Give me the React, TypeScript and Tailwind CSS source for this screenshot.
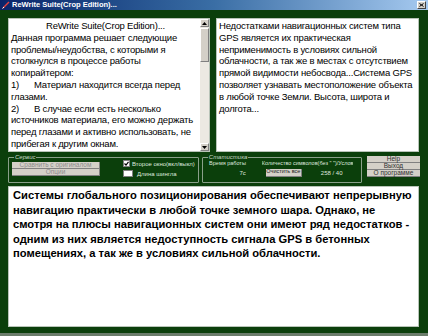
import React from 'react';

const leftLines: { text: string; num?: string; center?: boolean }[] = [
  { text: 'ReWrite Suite(Crop Edition)...', center: true },
  { text: 'Данная программа решает следующие' },
  { text: 'проблемы/неудобства, с которыми я' },
  { text: 'столкнулся в процессе работы' },
  { text: 'копирайтером:' },
  { num: '1)', text: 'Материал находится всегда перед' },
  { text: 'глазами.' },
  { num: '2)', text: 'В случае если есть несколько' },
  { text: 'источников материала, его можно держать' },
  { text: 'перед глазами и активно использовать, не' },
  { text: 'прибегая к другим окнам.' },
  { num: '3)', text: 'Имеется форма сравнения текстов' },
];

const rightLines = [
  'Недостатками навигационных систем типа',
  'GPS является их практическая',
  'неприменимость в условиях сильной',
  'облачности, а так же в местах с отсутствием',
  'прямой видимости небосвода...Система GPS',
  'позволяет узнавать местоположение объекта',
  'в любой точке Земли. Высота, широта и',
  'долгота...',
];

const mainLines = [
  'Системы глобального позиционирования обеспечивают непрерывную',
  'навигацию практически в любой точке земного шара. Однако, не',
  'смотря на плюсы навигационных систем они имеют ряд недостатков -',
  'одним из них является недоступность сигнала GPS в бетонных',
  'помещениях, а так же в условиях сильной облачности.',
];

const Arrow = ({ up }: { up?: boolean }) => (
  <div className="h-[8px] w-full bg-[#d4d0c8] border border-t-white border-l-white border-r-[#808080] border-b-[#808080] flex items-center justify-center">
    <svg width="5" height="3" viewBox="0 0 5 3">
      <path d={up ? 'M0 3 L2.5 0 L5 3 Z' : 'M0 0 L2.5 3 L5 0 Z'} fill="#000" />
    </svg>
  </div>
);

const SmallButton = ({ label, disabled }: { label: string; disabled?: boolean }) => (
  <div
    className={`h-[7px] bg-[#d4d0c8] border-b border-r border-[#808080] flex items-center justify-center text-[6.5px] leading-none ${
      disabled ? 'text-[#8c8c8c]' : 'text-[#202020]'
    }`}
  >
    {label}
  </div>
);

export default function App() {
  return (
    <div
      className="w-[428px] h-[336px] bg-[#0b3f0b] flex flex-col overflow-hidden border-b-[3px] border-[#6b7d6b]"
      style={{ fontFamily: '"Liberation Sans", Arial, sans-serif' }}
    >
      {/* title bar */}
      <div className="h-[10px] flex items-center bg-gradient-to-r from-[#0a246a] via-[#3a6ea5] to-[#a6caf0] px-[2px]">
        <svg width="8" height="8" viewBox="0 0 8 8" className="mr-[2px]">
          <path d="M1 7 L7 1" stroke="#e04040" strokeWidth="1.5" />
          <path d="M0.5 7.5 L2 6" stroke="#fff" strokeWidth="1" />
        </svg>
        <span className="text-[7.5px] font-bold text-white leading-none">ReWrite Suite(Crop Edition)...</span>
        <div className="ml-auto w-[9px] h-[8px] bg-[#d4d0c8] border border-t-white border-l-white border-r-[#404040] border-b-[#404040] flex items-center justify-center">
          <svg width="5" height="4" viewBox="0 0 5 4">
            <path d="M0.5 0.5 L4.5 3.5 M4.5 0.5 L0.5 3.5" stroke="#000" strokeWidth="1" />
          </svg>
        </div>
      </div>

      <div className="flex flex-col px-[8px] pt-[8px] flex-1">
        {/* top text panes */}
        <div className="flex gap-[6px] h-[134px]">
          <div className="w-[202px] bg-white border border-[#b8c4b8] flex overflow-hidden">
            <div className="flex-1 pl-[2px] pt-[1px] text-[9.5px] tracking-[-0.2px] leading-[11.8px] text-black overflow-hidden">
              {leftLines.map((l, i) => (
                <div key={i} className={`whitespace-nowrap flex ${l.center ? 'justify-center' : ''}`}>
                  {l.num && <span className="w-[23px] shrink-0">{l.num}</span>}
                  <span>{l.text}</span>
                </div>
              ))}
            </div>
            <div className="w-[9px] bg-[#ece9e2] flex flex-col">
              <Arrow up />
              <div className="mt-[1px] h-[34px] bg-[#d4d0c8] border border-t-white border-l-white border-r-[#808080] border-b-[#808080]" />
              <div className="flex-1" />
              <Arrow />
            </div>
          </div>
          <div className="w-[203px] bg-white border border-[#b8c4b8] pl-[2px] pt-[1px] text-[9.5px] tracking-[-0.2px] leading-[11.8px] text-black overflow-hidden">
            {rightLines.map((t, i) => (
              <div key={i} className="whitespace-nowrap">
                {t}
              </div>
            ))}
          </div>
        </div>

        {/* controls row */}
        <div className="flex h-[29px] mt-[2px] gap-[3px]">
          <fieldset className="w-[189px] border border-[#8aa08a] rounded-[1px] px-[3px] flex">
            <legend className="text-[6px] italic text-[#c8d8c8] leading-none px-[1px] ml-[2px]">Сервис</legend>
            <div className="flex w-full">
              <div className="w-[88px] flex flex-col mt-[2px]">
                <SmallButton label="Сравнить с оригиналом" disabled />
                <SmallButton label="Опции" disabled />
              </div>
              <div className="ml-[23px] flex flex-col gap-[3px]">
                <div className="flex items-center gap-[2px]">
                  <div className="w-[7px] h-[7px] bg-white border border-[#808080] flex items-center justify-center">
                    <svg width="5" height="5" viewBox="0 0 5 5">
                      <path d="M0.5 2.5 L2 4 L4.5 0.8" stroke="#000" strokeWidth="1.2" fill="none" />
                    </svg>
                  </div>
                  <span className="text-[6px] text-[#dfe8df] leading-none whitespace-nowrap">Второе окно(вкл/выкл)</span>
                </div>
                <div className="flex items-center gap-[4px]">
                  <div className="w-[10px] h-[7px] bg-white border border-[#808080]" />
                  <span className="text-[6px] text-[#dfe8df] leading-none whitespace-nowrap">Длина шингла</span>
                </div>
              </div>
            </div>
          </fieldset>

          <fieldset className="w-[160px] border border-[#8aa08a] rounded-[1px] px-[3px]">
            <legend className="text-[6px] italic text-[#c8d8c8] leading-none px-[1px] ml-[2px]">Статистика</legend>
            <div className="flex text-[5.5px] text-[#dfe8df] leading-none mt-[1px]">
              <div className="flex flex-col items-end w-[40px] gap-[3px]">
                <span className="whitespace-nowrap">Время работы</span>
                <span className="text-[6px]">7с</span>
              </div>
              <div className="ml-[16px] flex flex-col gap-[2px] overflow-hidden">
                <span className="whitespace-nowrap">Количество символов(без " ")/Услов</span>
                <div className="flex items-center">
                  <div className="ml-[4px] w-[36px] h-[8px] bg-[#d4d0c8] border-b border-r border-[#808080] flex items-center justify-center text-[5.5px] text-[#202020]">
                    Очистить все
                  </div>
                  <span className="ml-[19px] text-[6px]">258 / 40</span>
                </div>
              </div>
            </div>
          </fieldset>

          <div className="flex-1 flex flex-col pt-[2px] ml-[2px]">
            <div className="h-[7px] bg-[#d4d0c8] border-b border-[#808080] flex items-center justify-center text-[6.5px] text-[#303030] leading-none">Help</div>
            <div className="h-[7px] bg-[#d4d0c8] border-b border-[#808080] flex items-center justify-center text-[6.5px] text-[#303030] leading-none">Выход</div>
            <div className="h-[7px] bg-[#d4d0c8] border-b border-[#808080] flex items-center justify-center text-[6.5px] text-[#303030] leading-none">О программе</div>
          </div>
        </div>

        {/* main text */}
        <div className="mt-[3px] h-[141px] bg-white border border-[#b8c4b8] pl-[4px] pt-[1px] text-[11.2px] font-bold leading-[14.5px] text-black overflow-hidden mr-[1px]">
          {mainLines.map((t, i) => (
            <div key={i} className="whitespace-nowrap">
              {t}
            </div>
          ))}
        </div>
      </div>
    </div>
  );
}
